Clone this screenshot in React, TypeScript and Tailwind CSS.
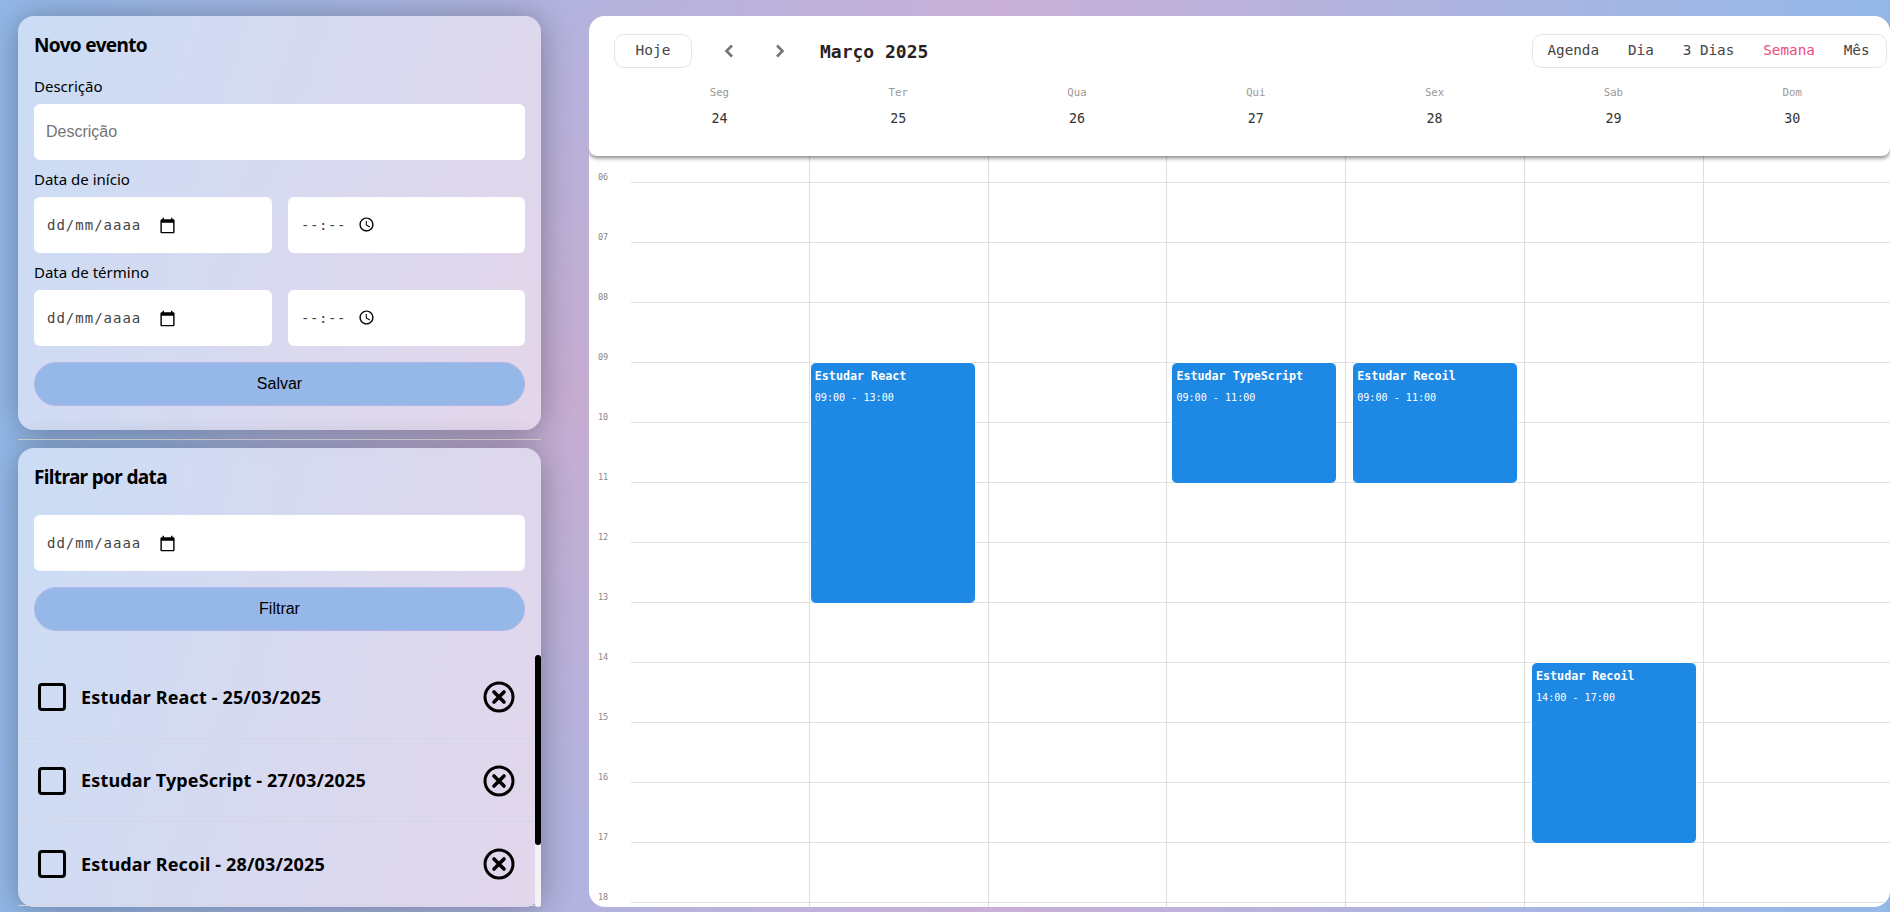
import React from "react";

const mono = "font-['DejaVu_Sans_Mono',monospace]";

const days = [
  { label: "Seg", num: 24 },
  { label: "Ter", num: 25 },
  { label: "Qua", num: 26 },
  { label: "Qui", num: 27 },
  { label: "Sex", num: 28 },
  { label: "Sab", num: 29 },
  { label: "Dom", num: 30 },
];

const hours = ["06", "07", "08", "09", "10", "11", "12", "13", "14", "15", "16", "17", "18"];

const events = [
  { day: 1, title: "Estudar React", time: "09:00 - 13:00", place: "left-0 top-[206px] h-[242px]" },
  { day: 3, title: "Estudar TypeScript", time: "09:00 - 11:00", place: "left-[4px] top-[206px] h-[122px]" },
  { day: 4, title: "Estudar Recoil", time: "09:00 - 11:00", place: "left-[6px] top-[206px] h-[122px]" },
  { day: 5, title: "Estudar Recoil", time: "14:00 - 17:00", place: "left-[6px] top-[506px] h-[182px]" },
];

const todos = [
  "Estudar React - 25/03/2025",
  "Estudar TypeScript - 27/03/2025",
  "Estudar Recoil - 28/03/2025",
];

const views = ["Agenda", "Dia", "3 Dias", "Semana", "Mês"];

function DateField({ full }: { full?: boolean }) {
  return (
    <div className={`h-14 bg-white rounded-md flex items-center pl-[13px] ${full ? "w-full" : "w-[238px]"}`}>
      <span className={`${mono} text-[14px] tracking-[1px] text-[#444]`}>dd/mm/aaaa</span>
      <svg viewBox="0 0 24 24" className="w-[17px] h-[17px] ml-[18px]" fill="#000">
        <path d="M20 3h-1V1h-2v2H7V1H5v2H4c-1.1 0-2 .9-2 2v16c0 1.1.9 2 2 2h16c1.1 0 2-.9 2-2V5c0-1.1-.9-2-2-2zm0 18H4V8h16v13z" />
      </svg>
    </div>
  );
}

function TimeField() {
  return (
    <div className="h-14 w-[237px] bg-white rounded-md flex items-center pl-[13px]">
      <span className={`${mono} text-[14px] tracking-[0.6px] text-[#444]`}>--:--</span>
      <svg viewBox="0 0 24 24" className="w-[17px] h-[17px] ml-[12px] -mt-[1px]" fill="#000">
        <path d="M11.99 2C6.47 2 2 6.48 2 12s4.47 10 9.99 10C17.52 22 22 17.52 22 12S17.52 2 11.99 2zM12 20c-4.42 0-8-3.58-8-8s3.58-8 8-8 8 3.58 8 8-3.58 8-8 8zm.5-13H11v6l5.25 3.15.75-1.23-4.5-2.67z" />
      </svg>
    </div>
  );
}

function Button({ children }: { children: React.ReactNode }) {
  return (
    <button className="w-full h-11 rounded-full bg-[#95b8e8] border border-[#b3b4ea] text-[16px] text-black font-['Liberation_Sans',sans-serif]">
      {children}
    </button>
  );
}

const card =
  "w-[523px] rounded-2xl bg-[linear-gradient(110deg,rgba(207,224,246,0.92),rgba(231,217,236,0.92))] shadow-[0_2px_32px_rgba(0,0,0,0.32)]";

const label = "block text-[15px] leading-[22px] mb-[7px]";
const cardTitle = "text-[19px] leading-7 font-bold tracking-[-0.65px]";

export default function App() {
  return (
    <div className="h-screen w-full overflow-hidden flex bg-[radial-gradient(ellipse_420px_420px_at_570px_400px,rgba(205,170,205,0.75),transparent),linear-gradient(90deg,#93b8e8,#c9b0d8_53%,#93b8e8)] pt-4 pb-[5px] pl-[18px] text-black font-['Noto_Sans',sans-serif]">
      {/* Left column: form and filter */}
      <aside className="flex flex-col w-[523px] shrink-0">
        <section className={`${card} px-4 pt-[15px] pb-6`}>
          <h2 className={`${cardTitle} mb-4`}>Novo evento</h2>
          <label className={label}>Descrição</label>
          <input
            placeholder="Descrição"
            className="w-full h-14 bg-white rounded-md pl-3 text-[16px] mb-2 outline-none placeholder:text-[#757575] font-['Liberation_Sans',sans-serif]"
          />
          <label className={label}>Data de início</label>
          <div className="flex gap-4 mb-2">
            <DateField />
            <TimeField />
          </div>
          <label className={label}>Data de término</label>
          <div className="flex gap-4 mb-4">
            <DateField />
            <TimeField />
          </div>
          <Button>Salvar</Button>
        </section>

        <hr className="mt-[9px] mb-2 border-t border-[#d4d4d8]" />

        <section className={`${card} flex-1 min-h-0 flex flex-col pt-[15px]`}>
          <div className="px-4">
            <h2 className={`${cardTitle} mb-6`}>Filtrar por data</h2>
            <DateField full />
            <div className="mt-4">
              <Button>Filtrar</Button>
            </div>
          </div>
          <ul className="relative mt-6 flex-1 min-h-0 overflow-hidden">
            {todos.map((t) => (
              <li key={t} className="h-[83.5px] flex items-center pt-[2px] pl-5 pr-[26px] border-b border-[#d3d5e6]">
                <span className="w-7 h-7 border-[3px] border-black rounded-[4px] shrink-0" />
                <span className="ml-[15px] flex-1 text-[18px] tracking-[0.15px] font-bold">{t}</span>
                <svg viewBox="0 0 32 32" className="w-8 h-8 shrink-0" fill="none" stroke="#000">
                  <circle cx="16" cy="16" r="14" strokeWidth="3" />
                  <path d="M11 11l10 10M21 11L11 21" strokeWidth="3.6" strokeLinecap="round" />
                </svg>
              </li>
            ))}
            {/* scrollbar */}
            <div className="absolute top-0 bottom-0 right-0 w-[6px] rounded-full bg-[#f3f3f5]">
              <div className="h-[190px] rounded-full bg-black" />
            </div>
          </ul>
        </section>
      </aside>

      {/* Right column: calendar */}
      <main className={`ml-12 flex-1 min-w-0 h-full bg-white rounded-2xl flex flex-col overflow-hidden ${mono}`}>
        <header className="relative z-10 h-[140px] shrink-0 bg-white rounded-b-lg shadow-[0_2px_4px_rgba(0,0,0,0.5)]">
          <div className="flex items-center pt-[18px] pl-[25px] pr-[3px]">
            <button className="w-[78px] h-[34px] rounded-[10px] border border-[#e5e5e5] text-[14.5px] text-[#444]">
              Hoje
            </button>
            <svg viewBox="0 0 10 14" className="w-[10px] h-[14px] ml-[32px]" fill="none" stroke="#757575" strokeWidth="2.6">
              <path d="M8 1.5L2.5 7 8 12.5" />
            </svg>
            <svg viewBox="0 0 10 14" className="w-[10px] h-[14px] ml-[41px]" fill="none" stroke="#757575" strokeWidth="2.6">
              <path d="M2 1.5L7.500 7 2 12.5" />
            </svg>
            <h1 className="ml-[35px] text-[18px] font-bold text-[#2b1f1f]">Março 2025</h1>
            <nav className="ml-auto h-[34px] w-[355px] flex items-center rounded-[10px] border border-[#e5e5e5] text-[14.3px] text-[#444]">
              {views.map((v) => (
                <span key={v} className={`px-[14.45px] ${v === "Semana" ? "text-[#ee4b7b]" : ""}`}>
                  {v}
                </span>
              ))}
            </nav>
          </div>
          <div className="grid grid-cols-[repeat(7,178.8px)] pl-[41px] mt-[17px]">
            {days.map((d) => (
              <div key={d.label} className="text-center">
                <div className="text-[10.7px] leading-[16px] text-[#999]">{d.label}</div>
                <div className="text-[13.3px] leading-[20px] mt-[8px] text-[#333]">{d.num}</div>
              </div>
            ))}
          </div>
        </header>

        <div className="flex-1 min-h-0 overflow-hidden flex">
          <div className="w-[42px] shrink-0 pl-[9px]">
            {hours.map((h, i) => (
              <div
                key={h}
                className={`${i === 0 ? "h-[27px]" : "h-[60px]"} flex items-end pb-[1px] text-[8.5px] leading-[10px] text-[#888]`}
              >
                {h}
              </div>
            ))}
          </div>
          <div className="flex-1 grid grid-cols-[repeat(6,178.8px)_1fr]">
            {days.map((d, i) => (
              <div key={d.label} className={`relative ${i < 6 ? "border-r border-[#ddd]" : ""}`}>
                <div className="h-[27px] border-b border-[#e0e0e0]" />
                {hours.slice(1).map((h) => (
                  <div key={h} className="h-[60px] border-b border-[#e0e0e0]" />
                ))}
                {events
                  .filter((e) => e.day === i)
                  .map((e) => (
                    <div
                      key={e.title + e.time}
                      className={`absolute w-[166px] ${e.place} bg-[#1e88e5] border border-white rounded-[6px] pl-[4px] pt-[5px] text-white`}
                    >
                      <div className="text-[11.7px] leading-[16px] font-bold">{e.title}</div>
                      <div className="text-[10.1px] leading-[14px] mt-[7px]">{e.time}</div>
                    </div>
                  ))}
              </div>
            ))}
          </div>
        </div>
      </main>
    </div>
  );
}
